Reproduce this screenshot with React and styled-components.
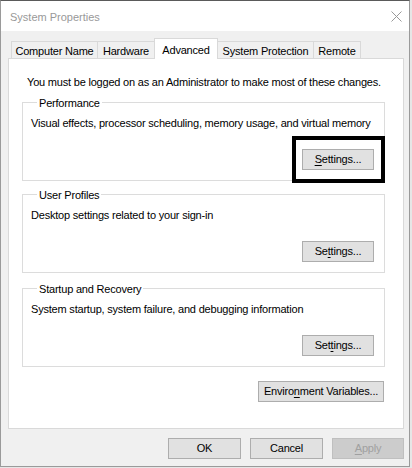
import React from "react";
import styled, { createGlobalStyle } from "styled-components";

const GlobalStyle = createGlobalStyle`
  html, body {
    margin: 0;
    padding: 0;
    background: #e6e6e6;
  }
  body {
    font-family: "Liberation Sans", Arial, sans-serif;
    font-size: 11px;
    color: #000;
  }
`;

const Window = styled.div`
  box-sizing: border-box;
  width: 410px;
  height: 467px;
  background: #f0f0f0;
  border: 1px solid #9a9a9a;
  border-top-color: #5a5a5a;
  display: flex;
  flex-direction: column;
`;

const TitleBar = styled.div`
  height: 30px;
  background: #fff;
  display: flex;
  align-items: center;
  justify-content: space-between;
  padding: 0 7px 0 9px;
`;

const Title = styled.span`
  color: #999;
  font-size: 11px;
  padding-top: 1px;
`;

const Body = styled.div`
  padding: 7px 5px 0 7px;
  display: flex;
  flex-direction: column;
`;

const TabRow = styled.div`
  display: flex;
  align-items: flex-end;
  height: 21px;
  margin: 0 0 -1px 3px;
  position: relative;
  z-index: 1;
`;

const Tab = styled.div`
  box-sizing: border-box;
  width: ${(p) => p.$w}px;
  height: ${(p) => (p.$active ? 21 : 17)}px;
  margin-bottom: ${(p) => (p.$active ? 0 : 1)}px;
  margin-left: ${(p) => (p.$first ? 0 : -1)}px;
  padding-top: 1px;
  background: ${(p) => (p.$active ? "#fff" : "#f0f0f0")};
  border: 1px solid #d9d9d9;
  border-bottom: none;
  display: flex;
  align-items: center;
  justify-content: center;
  letter-spacing: -0.2px;
  position: relative;
  z-index: ${(p) => (p.$active ? 2 : 1)};
`;

const Panel = styled.div`
  box-sizing: border-box;
  height: 371px;
  background: #fff;
  border: 1px solid #d9d9d9;
  padding-top: 13px;
  display: flex;
  flex-direction: column;
`;

const Intro = styled.p`
  margin: 0 0 0 18px;
  padding-top: 3px;
  line-height: 15px;
  letter-spacing: -0.2px;
`;

const Group = styled.fieldset`
  margin: ${(p) => p.$gap}px 18px 0 13px;
  padding: 0 10px 10px 8px;
  border: 1px solid #dcdcdc;
  min-width: 0;
`;

const Legend = styled.legend`
  margin-left: 6px;
  padding: 2px 2px 0;
  line-height: 14px;
  letter-spacing: -0.2px;
`;

const Desc = styled.div`
  margin-top: 6px;
  line-height: 15px;
  letter-spacing: -0.2px;
`;

const ButtonRow = styled.div`
  display: flex;
  justify-content: flex-end;
  margin-top: ${(p) => p.$top}px;
  margin-right: ${(p) => p.$right || 0}px;
`;

const ButtonWrap = styled.div`
  position: relative;
`;

const Button = styled.button`
  box-sizing: border-box;
  width: ${(p) => p.$w}px;
  height: 21px;
  padding: 0;
  margin: 0;
  background: ${(p) => (p.disabled ? "#cccccc" : "#e1e1e1")};
  border: 1px solid ${(p) => (p.disabled ? "#bfbfbf" : "#adadad")};
  border-radius: 0;
  color: ${(p) => (p.disabled ? "#a0a0a0" : "#000")};
  font-family: "Liberation Sans", Arial, sans-serif;
  font-size: 11px;
  letter-spacing: -0.2px;
  line-height: 19px;
  text-align: center;

  u {
    text-underline-offset: 2px;
  }
`;

const Highlight = styled.div`
  position: absolute;
  top: -13px;
  left: -10px;
  right: -11px;
  bottom: -13px;
  border: 4px solid #000;
  pointer-events: none;
  z-index: 3;
`;

const Footer = styled.div`
  display: flex;
  justify-content: flex-end;
  gap: 9px;
  margin-top: 9px;
`;

const CloseIcon = () => (
  <svg width="11" height="11" viewBox="0 0 11 11">
    <path d="M0.5 0.5 L10.5 10.5 M10.5 0.5 L0.5 10.5" stroke="#999" strokeWidth="1" fill="none" />
  </svg>
);

const tabs = [
  { label: "Computer Name", w: 87 },
  { label: "Hardware", w: 58 },
  { label: "Advanced", w: 64, active: true },
  { label: "System Protection", w: 97 },
  { label: "Remote", w: 48 },
];

const SettingsGroup = ({ title, text, gap, children }) => (
  <Group $gap={gap}>
    <Legend>{title}</Legend>
    <Desc>{text}</Desc>
    <ButtonRow $top={18}>{children}</ButtonRow>
  </Group>
);

export default function App() {
  return (
    <>
      <GlobalStyle />
      <Window>
        <TitleBar>
          <Title>System Properties</Title>
          <CloseIcon />
        </TitleBar>
        <Body>
          <TabRow>
            {tabs.map((t, i) => (
              <Tab key={t.label} $w={t.w} $active={t.active} $first={i === 0}>
                {t.label}
              </Tab>
            ))}
          </TabRow>
          <Panel>
            <Intro>You must be logged on as an Administrator to make most of these changes.</Intro>
            <SettingsGroup
              gap={4}
              title="Performance"
              text="Visual effects, processor scheduling, memory usage, and virtual memory"
            >
              <ButtonWrap>
                <Button $w={72}>
                  <u>S</u>ettings...
                </Button>
                <Highlight />
              </ButtonWrap>
            </SettingsGroup>
            <SettingsGroup gap={5} title="User Profiles" text="Desktop settings related to your sign-in">
              <Button $w={72}>
                Se<u>t</u>tings...
              </Button>
            </SettingsGroup>
            <SettingsGroup
              gap={7}
              title="Startup and Recovery"
              text="System startup, system failure, and debugging information"
            >
              <Button $w={72}>
                Set<u>t</u>ings...
              </Button>
            </SettingsGroup>
            <ButtonRow $top={14} $right={19}>
              <Button $w={126}>
                Enviro<u>n</u>ment Variables...
              </Button>
            </ButtonRow>
          </Panel>
          <Footer>
            <Button $w={73}>OK</Button>
            <Button $w={73}>Cancel</Button>
            <Button $w={72} disabled>
              <u>A</u>pply
            </Button>
          </Footer>
        </Body>
      </Window>
    </>
  );
}
